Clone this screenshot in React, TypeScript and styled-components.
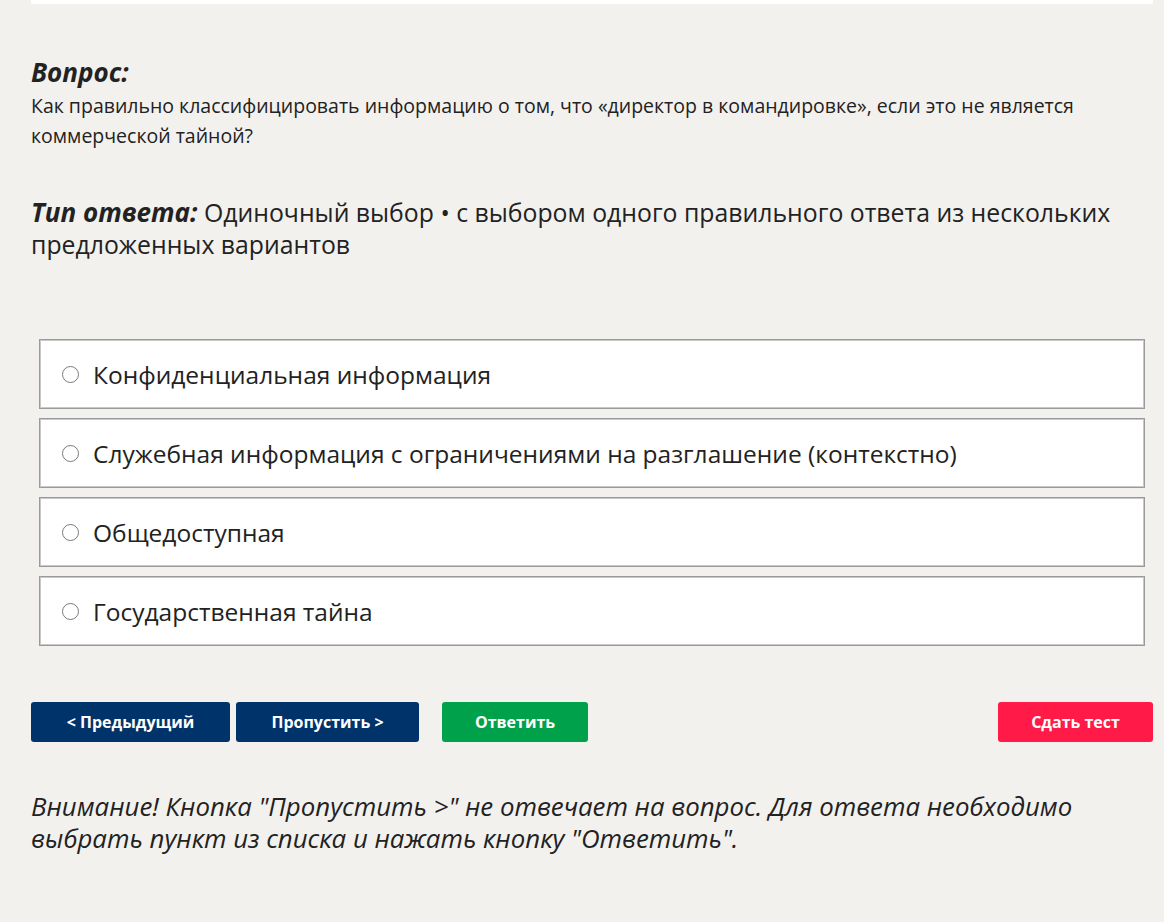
import React from "react";
import styled, { createGlobalStyle } from "styled-components";

const Global = createGlobalStyle`
  html, body { margin: 0; padding: 0; background: #f2f1ee; }
  body { font-family: "Open Sans", "Noto Sans", sans-serif; color: #222; }
`;

const Page = styled.div`
  padding: 0 11px 40px 31px;
  display: flex;
  flex-direction: column;
`;

const TopBar = styled.div`
  height: 4px;
  background: #ffffff;
`;

const QuestionBlock = styled.section`
  margin-top: 51px;
  display: flex;
  flex-direction: column;
`;

const Heading = styled.h2`
  margin: 0;
  font-family: "Open Sans", sans-serif;
  font-style: italic;
  font-weight: 700;
  font-size: 26px;
  line-height: 34px;
  color: #222;
`;

const QuestionText = styled.p`
  margin: 2px 0 0;
  font-family: "Open Sans", sans-serif;
  font-size: 19.5px;
  line-height: 30px;
  color: #222;
  max-width: 1080px;
`;

const TypeLine = styled.p`
  margin: 45px 0 0;
  font-family: "Open Sans", "Noto Sans", sans-serif;
  font-size: 24.8px;
  line-height: 32px;
  color: #222;
  max-width: 1100px;
`;

const TypeLabel = styled.span`
  font-style: italic;
  font-weight: 700;
  font-size: 26px;
  line-height: 32px;
`;

const Options = styled.div`
  margin: 79px 8px 0;
  display: flex;
  flex-direction: column;
  gap: 9px;
`;

const Option = styled.label`
  height: 70px;
  box-sizing: border-box;
  background: #fff;
  border: 1px solid #9a9a9a;
  box-shadow: inset 0 0 0 1px #c8c8c8;
  display: flex;
  align-items: center;
  padding-left: 22px;
  gap: 14px;
  font-family: "Open Sans", "Noto Sans", sans-serif;
  font-size: 24.5px;
  color: #222;
  cursor: pointer;
`;

const Radio = styled.span`
  box-sizing: border-box;
  width: 17px;
  height: 17px;
  border: 1.6px solid #7a7a7a;
  border-radius: 50%;
  background: #fff;
  flex: none;
`;

const ButtonRow = styled.div`
  margin-top: 56px;
  display: flex;
  align-items: center;
`;

const Btn = styled.button<{ $bg: string; $w: number; $ml?: number }>`
  width: ${(p) => p.$w}px;
  height: 40px;
  margin-left: ${(p) => p.$ml ?? 0}px;
  border: none;
  border-radius: 3px;
  background: ${(p) => p.$bg};
  color: #fff;
  font-family: "Open Sans", "Noto Sans", sans-serif;
  font-weight: 700;
  font-size: 16px;
  cursor: pointer;
`;

const Spacer = styled.div`
  flex: 1;
`;

const Warning = styled.p`
  margin: 48px 0 0;
  font-family: "Open Sans", sans-serif;
  font-style: italic;
  font-size: 25.8px;
  line-height: 32px;
  color: #222;
  max-width: 1060px;
`;

const options = [
  "Конфиденциальная информация",
  "Служебная информация с ограничениями на разглашение (контекстно)",
  "Общедоступная",
  "Государственная тайна",
];

export default function App() {
  return (
    <>
      <Global />
      <Page>
        <TopBar />
        <QuestionBlock>
          <Heading>Вопрос:</Heading>
          <QuestionText>
            Как правильно классифицировать информацию о том, что «директор в командировке», если это не является коммерческой тайной?
          </QuestionText>
        </QuestionBlock>
        <TypeLine>
          <TypeLabel>Тип ответа:</TypeLabel> Одиночный выбор • с выбором одного правильного ответа из нескольких предложенных вариантов
        </TypeLine>
        <Options>
          {options.map((o) => (
            <Option key={o}>
              <Radio />
              {o}
            </Option>
          ))}
        </Options>
        <ButtonRow>
          <Btn $bg="#00336a" $w={199}>&lt; Предыдущий</Btn>
          <Btn $bg="#00336a" $w={183} $ml={6}>Пропустить &gt;</Btn>
          <Btn $bg="#00a14b" $w={146} $ml={23}>Ответить</Btn>
          <Spacer />
          <Btn $bg="#ff1a48" $w={155}>Сдать тест</Btn>
        </ButtonRow>
        <Warning>
          Внимание! Кнопка "Пропустить &gt;" не отвечает на вопрос. Для ответа необходимо выбрать пункт из списка и нажать кнопку "Ответить".
        </Warning>
      </Page>
    </>
  );
}
